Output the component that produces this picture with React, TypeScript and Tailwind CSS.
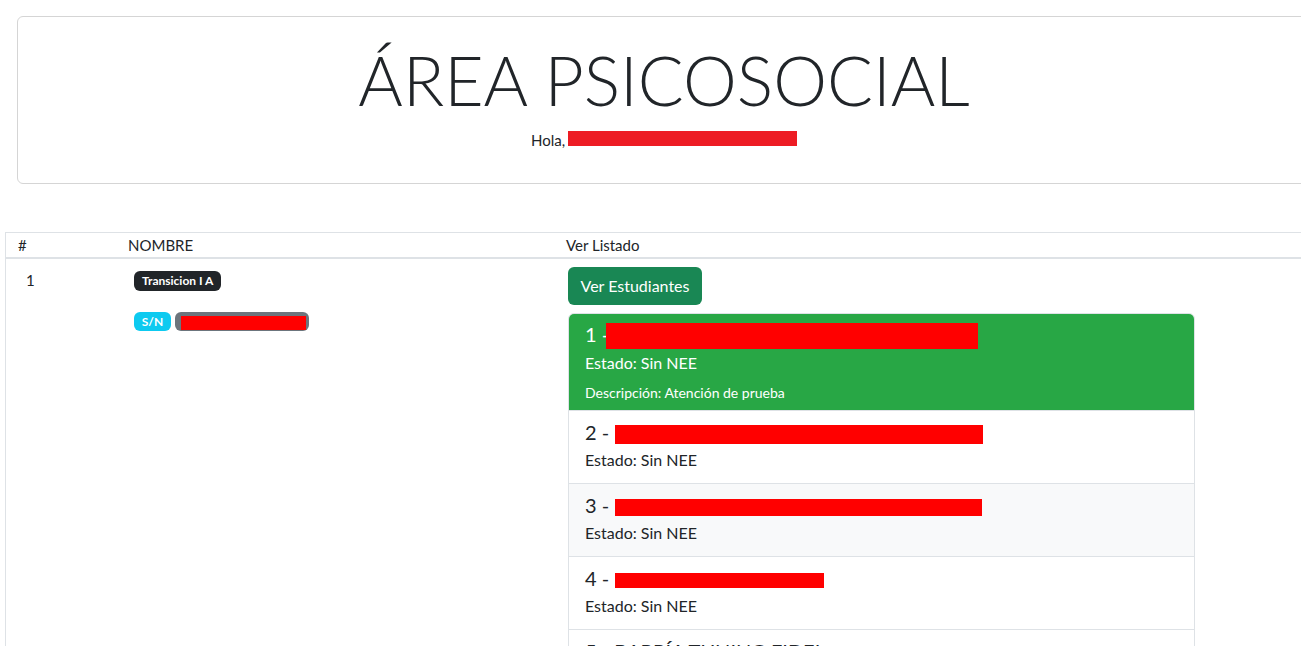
const students = [
  { n: 2, red: 368, h: 19, bg: 'bg-white' },
  { n: 3, red: 367, h: 17, bg: 'bg-[#f8f9fa]' },
  { n: 4, red: 209, h: 15, bg: 'bg-white' },
];

function Redacted({ w, h, color = 'bg-[#ff0000]' }: { w: number; h: number; color?: string }) {
  return <span className={`inline-block align-middle ${color}`} style={{ width: w, height: h }}></span>;
}

export default function App() {
  return (
    <div className="w-[1301px] h-[646px] overflow-hidden bg-white text-[#212529] font-['Lato',sans-serif]">
      <div className="w-[1340px]">
        <div className="ml-[17px] mt-4 w-[1294px] h-[168px] border border-[#d5d5d5] rounded-md flex flex-col items-center">
          <h1 className="mt-[21px] text-[68px] leading-[84px] font-light">ÁREA PSICOSOCIAL</h1>
          <p className="mt-[6px] text-[15px] leading-6 flex items-center">
            Hola,
            <span className="relative -top-[2px] inline-block ml-[3px] w-[229px] h-[15px] bg-[#ed1c24]"></span>
          </p>
        </div>

        <div className="ml-[5px] mt-[48px] border-l border-t border-[#dee2e6]">
          <div className="grid grid-cols-[111px_442px_1fr] h-[26px] items-center border-b-2 border-[#dee2e6] text-[15px]">
            <div className="pl-[12px]">#</div>
            <div className="pl-[11px]">NOMBRE</div>
            <div className="pl-[7px]">Ver Listado</div>
          </div>
          <div className="grid grid-cols-[111px_442px_1fr] items-start">
            <div className="pl-[20px] pt-[10px] text-[15px]">1</div>
            <div className="pl-[17px] pt-[12px] flex flex-col items-start gap-[21px]">
              <span className="h-5 px-2 rounded-md bg-[#212529] text-white text-[12px] font-bold leading-5">Transicion I A</span>
              <div className="flex gap-1">
                <span className="h-[19px] w-[37px] flex items-center justify-center rounded-md bg-[#0dcaf0] text-white text-[12px] font-bold">S/N</span>
                <span className="h-[19px] w-[134px] rounded-md bg-[#6c757d] pl-[6px] pt-1">
                  <span className="block w-[125px] h-[14px] bg-[#ff0000]"></span>
                </span>
              </div>
            </div>
            <div className="pl-[9px] pt-2">
              <button className="h-[38px] w-[134px] rounded-md bg-[#198754] text-white text-base">Ver Estudiantes</button>
              <div className="mt-2 w-[627px] rounded-t-md border border-[#dee2e6] overflow-hidden">
                <div className="bg-[#28a745] text-white px-4 pt-2 pb-[7px]">
                  <div className="h-6 text-xl leading-6 flex items-center">
                    1 -<span className="-ml-[3px] mt-[2px]"><Redacted w={372} h={26} /></span>
                  </div>
                  <div className="mt-[5px] text-base leading-6">Estado: Sin NEE</div>
                  <div className="mt-[7px] text-sm leading-[21px]">Descripción: Atención de prueba</div>
                </div>
                {students.map((s) => (
                  <div key={s.n} className={`${s.bg} border-t border-[#dee2e6] px-4 pt-[9px] pb-[11px]`}>
                    <div className="h-6 text-xl leading-6 flex items-center">
                      {s.n} -<span className="ml-[6px]"><Redacted w={s.red} h={s.h} /></span>
                    </div>
                    <div className="mt-1 text-base leading-6">Estado: Sin NEE</div>
                  </div>
                ))}
                <div className="bg-white border-t border-[#dee2e6] px-4 pt-[9px] pb-[11px]">
                  <div className="text-xl leading-6">5 - BARRÍA TUNING FIDEL</div>
                  <div className="mt-1 text-base leading-6">Estado: Sin NEE</div>
                </div>
              </div>
            </div>
          </div>
        </div>
      </div>
    </div>
  );
}
